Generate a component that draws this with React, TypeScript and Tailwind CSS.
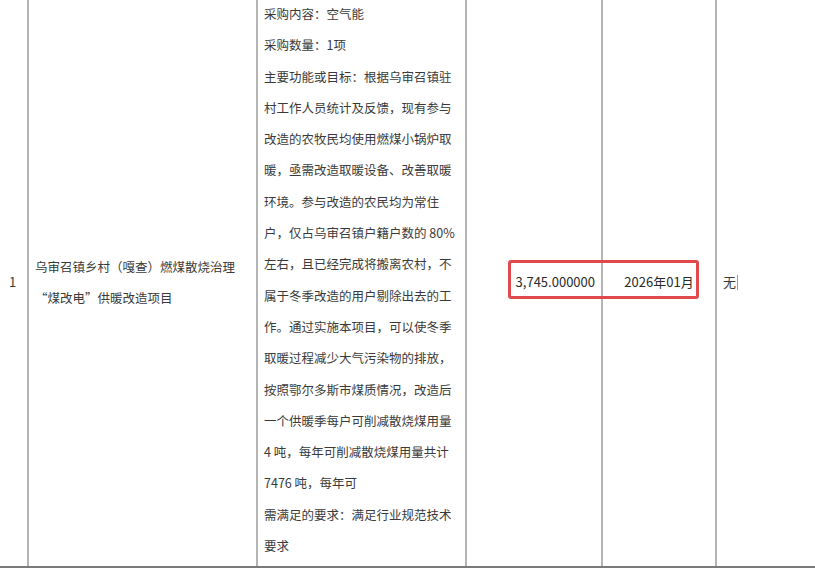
import React from "react";

const lines = [
  "采购内容：空气能",
  "采购数量：1项",
  "主要功能或目标：根据乌审召镇驻",
  "村工作人员统计及反馈，现有参与",
  "改造的农牧民均使用燃煤小锅炉取",
  "暖，亟需改造取暖设备、改善取暖",
  "环境。参与改造的农民均为常住",
  "户，仅占乌审召镇户籍户数的 80%",
  "左右，且已经完成将搬离农村，不",
  "属于冬季改造的用户剔除出去的工",
  "作。通过实施本项目，可以使冬季",
  "取暖过程减少大气污染物的排放，",
  "按照鄂尔多斯市煤质情况，改造后",
  "一个供暖季每户可削减散烧煤用量",
  "4 吨，每年可削减散烧煤用量共计",
  "7476 吨，每年可",
  "需满足的要求：满足行业规范技术",
  "要求",
];

export default function App() {
  return (
    <div
      className="relative w-[815px] h-[568px] overflow-hidden bg-white text-[#3a3a3a] text-[12.5px]"
      style={{ fontFamily: '"Noto Sans CJK SC", "Noto Sans", sans-serif' }}
    >
      <div className="flex h-[570px] -mt-[2px] border-b-2 border-[#7a7a7a]">
        <div className="w-[29px] shrink-0 border-r-2 border-[#b4b4b4] flex items-center pl-[9px] text-[13px]">
          1
        </div>
        <div className="w-[229px] shrink-0 border-r-2 border-[#b4b4b4] flex flex-col justify-center pl-[6px] leading-[31.3px] whitespace-nowrap">
          <div>乌审召镇乡村（嘎查）燃煤散烧治理</div>
          <div>“煤改电”供暖改造项目</div>
        </div>
        <div className="w-[209px] shrink-0 border-r-2 border-[#b4b4b4] pl-[6px] leading-[31.3px] whitespace-nowrap">
          {lines.map((l, i) => (
            <div key={i}>{l}</div>
          ))}
        </div>
        <div className="w-[136px] shrink-0 border-r-2 border-[#b4b4b4] flex items-center justify-end pr-[6px] text-[13px] text-[#2a2a2a]">
          3,745.000000
        </div>
        <div className="w-[114px] shrink-0 border-r-2 border-[#b4b4b4] flex items-center justify-center text-[13px] text-[#2a2a2a]">
          2026年01月
        </div>
        <div className="flex-1 flex items-center pl-[6px] text-[13px]">
          <span>无</span>
          <span className="inline-block w-px h-[15px] bg-[#9a9a9a] ml-[1px]" />
        </div>
      </div>
      <div className="absolute left-[508px] top-[260px] w-[191px] h-[39px] border-[3px] border-[#e04a4f] rounded-[3px]" />
    </div>
  );
}
